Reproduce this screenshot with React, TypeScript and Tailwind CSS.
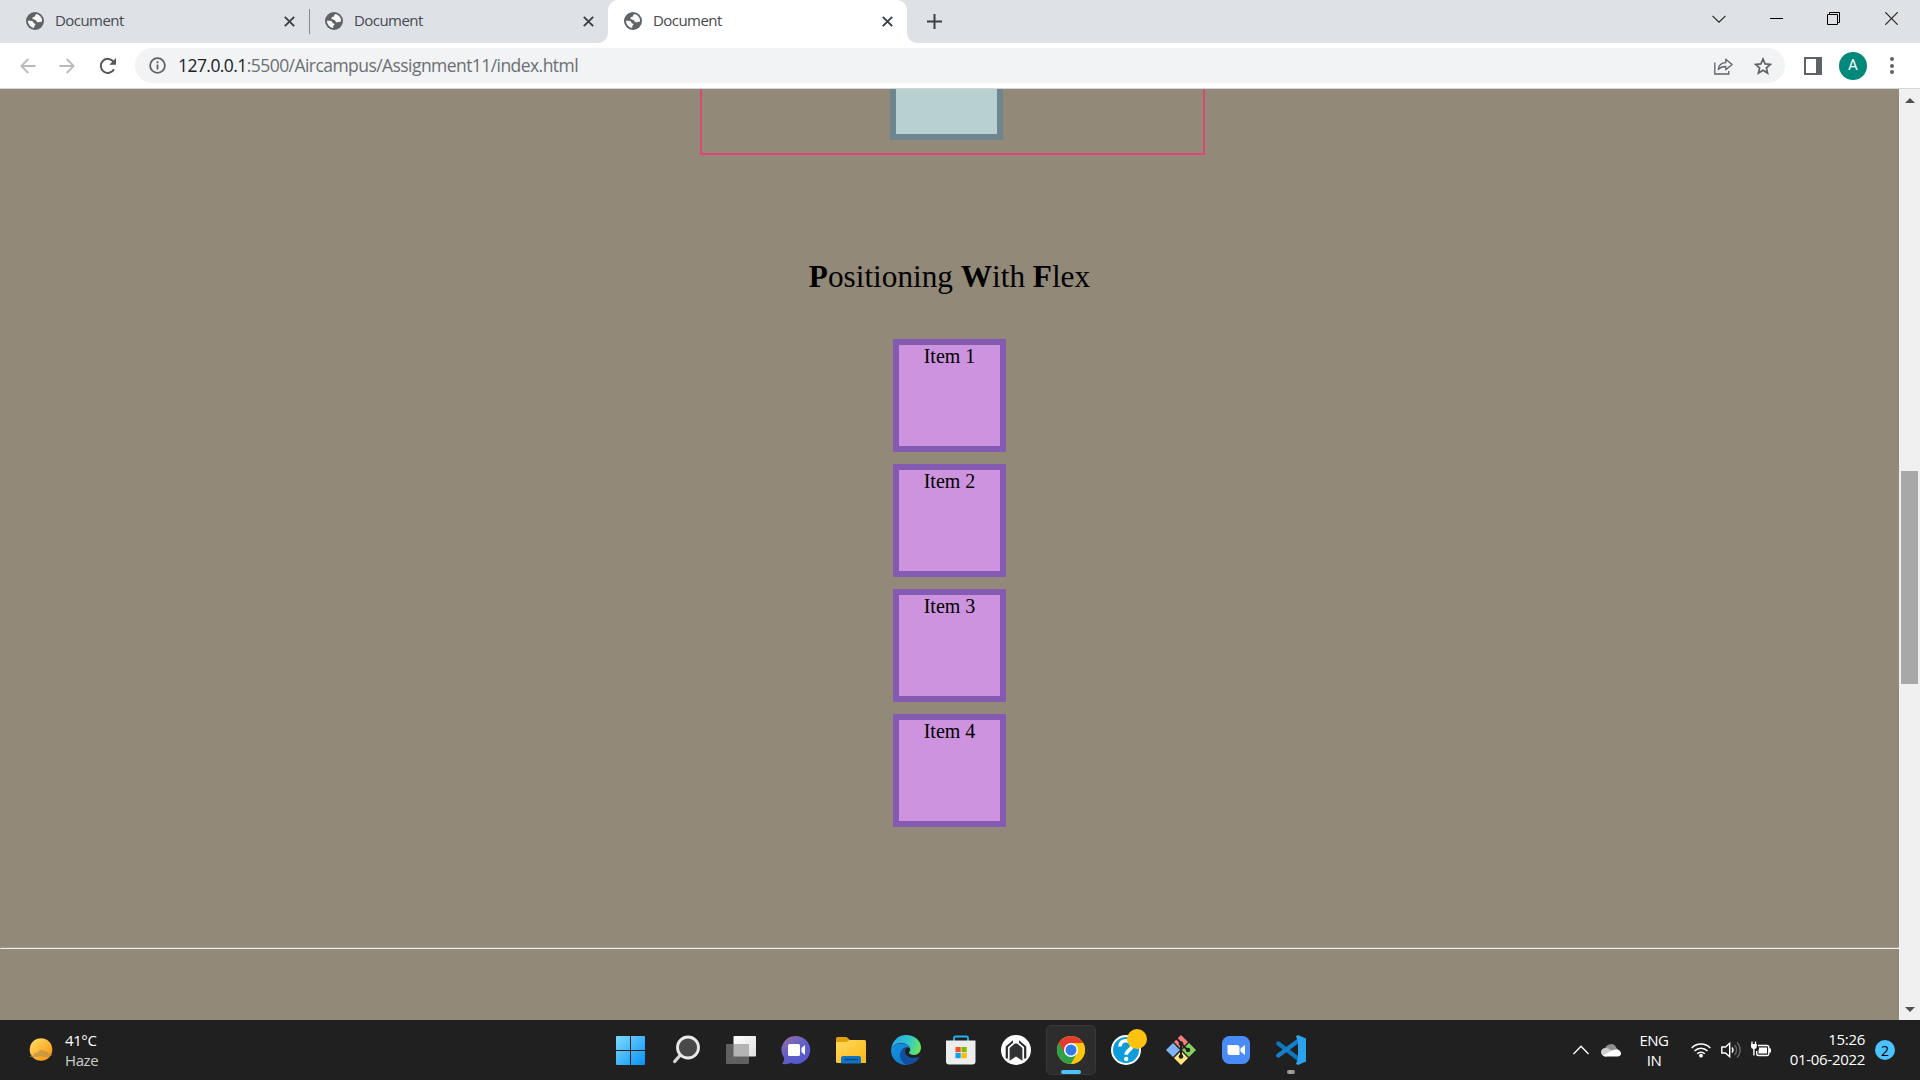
import React from "react";

function Globe() {
  return (
    <svg width="18" height="18" viewBox="0 0 18 18">
      <circle cx="9" cy="9" r="9" fill="#5f6368" />
      <path
        d="M10.600 2C9.600 2.600 8.800 3.400 9 4.500c-1.600.1-2.800 1-2.600 2.200.2 1.100 1.600.9 2.900 1.300 1.400.5.900 2.200 2.400 2.300 1.500.1 2.400-.9 4.400-.9A7.100 7.100 0 0 0 10.600 2zM1.900 8.800c2-.1 4.500-.3 5.200.9.500 1 .4 1.700 1.700 1.900.9.100 1 1 .1 1.700-.8.600-.6 1.800-.7 2.700A7.100 7.100 0 0 1 1.900 8.800z"
        fill="#fff"
        fillOpacity=".95"
      />
    </svg>
  );
}

function Cross() {
  return (
    <svg width="11" height="11" viewBox="0 0 11 11" stroke="#3c4043" strokeWidth="1.9">
      <path d="M.8.8l9.400 9.400M10.200.8L.8 10.200" />
    </svg>
  );
}

function TabContent() {
  return (
    <>
      <Globe />
      <span className="-mt-[2px] ml-[11px] w-[229px] whitespace-nowrap text-[15px] leading-5 tracking-[-0.55px] text-[#45494d]">Document</span>
      <Cross />
    </>
  );
}

function TabStrip() {
  return (
    <div className="flex h-[43px] bg-[#dee1e6]">
      <div className="flex h-[42px] w-[309px] items-center pl-[26px]">
        <TabContent />
      </div>
      <div className="mt-[9px] h-[25px] w-px bg-[#85888d]" />
      <div className="flex h-[42px] w-[288px] items-center pl-[15px]">
        <TabContent />
      </div>
      <div className="h-[43px] w-[10px] bg-white">
        <div className="h-full w-full rounded-br-[10px] bg-[#dee1e6]" />
      </div>
      <div className="h-[43px] w-[299px] rounded-t-[10px] bg-white">
        <div className="flex h-[42px] items-center pl-4">
          <TabContent />
        </div>
      </div>
      <div className="h-[43px] w-[10px] bg-white">
        <div className="h-full w-full rounded-bl-[10px] bg-[#dee1e6]" />
      </div>
      <svg className="ml-[10px] mt-[14px]" width="15" height="15" viewBox="0 0 15 15" stroke="#3c4043" strokeWidth="2">
        <path d="M7.500 0v15M0 7.500h15" />
      </svg>
      <div className="ml-auto flex h-[37px] items-center pr-[22px]">
        <svg className="mr-[44px]" width="14" height="8" viewBox="0 0 14 8" fill="none" stroke="#222" strokeWidth="1.100">
          <path d="M.5.8L7 7.200 13.500.8" />
        </svg>
        <div className="mr-[44px] h-px w-[13px] bg-black" />
        <svg className="mr-[45px]" width="13" height="13" viewBox="0 0 13 13" fill="none" stroke="#000">
          <path d="M.5 2.500h10v10H.5zM2.500 2.500v-2h10v10h-2" />
        </svg>
        <svg width="13" height="13" viewBox="0 0 13 13" stroke="#222" strokeWidth="1.200">
          <path d="M.3.3l12.400 12.400M12.700.3L.3 12.700" />
        </svg>
      </div>
    </div>
  );
}

function Toolbar() {
  return (
    <div className="flex h-[46px] items-center border-b border-[#d4d6d9] bg-white pl-5">
      <svg width="16" height="16" viewBox="0 0 16 16" fill="none" stroke="#b8babd" strokeWidth="1.800">
        <path d="M15.500 8H1.500M8.300 1L1.300 8l7 7" />
      </svg>
      <svg className="ml-[23px]" width="16" height="16" viewBox="0 0 16 16" fill="none" stroke="#b8babd" strokeWidth="1.800">
        <path d="M.5 8h14M7.700 1l7 7-7 7" />
      </svg>
      <svg className="ml-[24px]" width="18" height="18" viewBox="0 0 18 18" fill="none" stroke="#54585c" strokeWidth="2">
        <path d="M15 12.200A7 7 0 1 1 14.600 4.900" />
        <path d="M17 1v6.700h-6.700z" fill="#54585c" stroke="none" />
      </svg>
      <div className="ml-[18px] flex h-[35px] w-[1650px] items-center rounded-full bg-[#f1f3f4] pl-[14px] pr-[13px]">
        <svg width="17" height="17" viewBox="0 0 17 17" fill="none" stroke="#5f6368" strokeWidth="1.800">
          <circle cx="8.500" cy="8.500" r="7.400" />
          <path d="M8.500 7.500v5M8.500 4.300v1.900" />
        </svg>
        <span className="-mt-px ml-[12px] whitespace-nowrap text-[17.5px] leading-6 tracking-[-0.56px] text-[#6b6f73]">
          <span className="text-[#202124]">127.0.0.1</span>:5500/Aircampus/Assignment11/index.html
        </span>
        <svg className="ml-auto" width="19" height="18" viewBox="0 0 19 18" fill="none" stroke="#5f6368" strokeWidth="1.300">
          <path d="M.8 5.500V17h14v-3" />
          <path d="M4.300 12.500c.4-4.300 3-6.600 7.500-6.800V2.200l6.300 5.300-6.300 5.300V9.500c-3.400 0-5.600.9-7.500 3z" strokeLinejoin="round" />
        </svg>
        <svg className="ml-[21px]" width="18" height="18" viewBox="0 0 18 18" fill="none" stroke="#5f6368" strokeWidth="1.700">
          <path d="M9 2l2.100 4.900 5.300.5-4 3.500 1.200 5.200L9 13.300l-4.600 2.800 1.200-5.200-4-3.500 5.300-.5z" />
        </svg>
      </div>
      <div className="ml-[19px] h-[18px] w-[18px] border-2 border-r-[6px] border-[#5f6368]" />
      <div className="ml-[17px] flex h-7 w-7 items-center justify-center rounded-full bg-[#00897b] font-[Roboto,sans-serif] text-[15px] text-white">A</div>
      <div className="ml-[23px] flex flex-col gap-[2.5px]">
        <span className="h-1 w-1 rounded-full bg-[#5f6368]" />
        <span className="h-1 w-1 rounded-full bg-[#5f6368]" />
        <span className="h-1 w-1 rounded-full bg-[#5f6368]" />
      </div>
    </div>
  );
}

function Page() {
  return (
    <div className="flex h-[931px]">
      <div className="w-[1899px] overflow-hidden bg-[#928979] font-['Liberation_Serif','Times_New_Roman',serif] text-black">
        <div className="ml-[700px] h-[66px] w-[505px] border-2 border-t-0 border-[#db4779]">
          <div className="ml-[188px] h-[51px] w-[113px] border-[6px] border-t-0 border-[#6c858e] bg-[#b9d0d1]" />
        </div>
        <h1 className="mt-[103px] text-center text-[31.25px] leading-[38px]">
          <b>P</b>ositioning <b>W</b>ith <b>F</b>lex
        </h1>
        <div className="mt-[43px] flex flex-col items-center gap-3">
          {[1, 2, 3, 4].map((n) => (
            <div key={n} className="h-[113px] w-[113px] border-[6px] border-[#845ab3] bg-[#ce93df] text-center text-[20px] leading-[23px]">
              Item {n}
            </div>
          ))}
        </div>
        <div className="mt-[120px] h-[2px] border border-b-[#eee] border-l-[#9a9a9a] border-r-[#eee] border-t-[#a09b92]" />
      </div>
      <div className="flex w-[21px] flex-col items-center bg-[#f0f0f0]">
        <svg className="mt-[9px]" width="10" height="5" viewBox="0 0 10 5">
          <path d="M0 5L5 0l5 5z" fill="#505050" />
        </svg>
        <div className="mt-[368px] h-[213px] w-[17px] bg-[#a8a8a8]" />
        <svg className="mb-[8px] mt-auto" width="10" height="5" viewBox="0 0 10 5">
          <path d="M0 0l5 5 5-5z" fill="#505050" />
        </svg>
      </div>
    </div>
  );
}

function Windows() {
  return (
    <svg width="30" height="30" viewBox="0 0 30 30">
      <defs>
        <linearGradient id="win" x1="0" y1="0" x2="29" y2="29" gradientUnits="userSpaceOnUse">
          <stop stopColor="#7fdcff" />
          <stop offset="1" stopColor="#0a93f5" />
        </linearGradient>
      </defs>
      <path d="M0 2a1 1 0 0 1 1-1H14V15H0zM15 1h13a1 1 0 0 1 1 1V15H15zM0 16H14v14H1a1 1 0 0 1-1-1zM15 16h14v13a1 1 0 0 1-1 1H15z" fill="url(#win)" />
    </svg>
  );
}

function Search() {
  return (
    <svg width="30" height="30" viewBox="0 0 30 30">
      <path d="M9.800 19.500L3.700 26.500" stroke="#d2d4d6" strokeWidth="3.400" strokeLinecap="round" />
      <circle cx="17" cy="12.500" r="10.500" fill="#484848" stroke="#e9eaeb" strokeWidth="2.800" />
    </svg>
  );
}

function TaskView() {
  return (
    <svg width="30" height="30" viewBox="0 0 30 30">
      <defs>
        <linearGradient id="tv" x1="0" y1="0" x2="1" y2="1">
          <stop stopColor="#fff" />
          <stop offset="1" stopColor="#dedede" />
        </linearGradient>
      </defs>
      <rect x="7.500" y="1" width="22.500" height="20.500" rx="1" fill="url(#tv)" />
      <rect x="0" y="9" width="23" height="20" rx="1" fill="#606060" />
      <path d="M7.500 9H23v12.500H7.500z" fill="#b4b4b4" />
    </svg>
  );
}

function Chat() {
  return (
    <svg width="30" height="30" viewBox="0 0 30 30">
      <defs>
        <linearGradient id="chat" x1="0" y1="0" x2=".7" y2="1">
          <stop stopColor="#9a6da4" />
          <stop offset=".55" stopColor="#6260c4" />
          <stop offset="1" stopColor="#5356cf" />
        </linearGradient>
      </defs>
      <path d="M15.500 1a14 14 0 1 1-5.500 27c-3 1.200-5.800 1.300-8.800 1 1.200-1.600 1.900-3.500 1.900-6A14 14 0 0 1 15.500 1z" fill="url(#chat)" />
      <rect x="7" y="9" width="12" height="12" rx="1.500" fill="#fff" />
      <path d="M20.500 13l3.500-3v10l-3.500-3z" fill="#fff" />
    </svg>
  );
}

function Explorer() {
  return (
    <svg width="30" height="30" viewBox="0 0 30 30">
      <defs>
        <linearGradient id="fold" x1="0" y1="0" x2="1" y2="1">
          <stop stopColor="#ffd95e" />
          <stop offset="1" stopColor="#fab916" />
        </linearGradient>
      </defs>
      <path d="M0 3.500A1.500 1.500 0 0 1 1.500 2h9L14 5h15v10H0z" fill="#e0a008" />
      <path d="M0 7h10.500L13.500 5H28.500A1.500 1.500 0 0 1 30 6.500V28H1.500A1.500 1.500 0 0 1 0 26.500z" fill="url(#fold)" />
      <path d="M5 28.500V23a2 2 0 0 1 2-2h16a2 2 0 0 1 2 2v5.500z" fill="#1173c4" />
      <path d="M9 24.500h12.500" stroke="#0a4781" strokeWidth="1.300" strokeLinecap="round" />
    </svg>
  );
}

function Edge() {
  return (
    <svg width="30" height="30" viewBox="0 0 30 30">
      <defs>
        <linearGradient id="e1" x1="2" y1="5" x2="30" y2="15" gradientUnits="userSpaceOnUse">
          <stop stopColor="#29a9e8" />
          <stop offset=".5" stopColor="#30c6cf" />
          <stop offset="1" stopColor="#6fea4e" />
        </linearGradient>
        <linearGradient id="e2" x1="0" y1="8" x2="16" y2="30" gradientUnits="userSpaceOnUse">
          <stop stopColor="#1795e0" />
          <stop offset="1" stopColor="#0b77d0" />
        </linearGradient>
      </defs>
      <path d="M0 15C1 6 7 0 15 0c9 0 15 6 15 12.500 0 4.500-3 7.500-7 7.500-3 0-5-1-5-2.200 0-.8 1.200-1.200 1.200-3.300C19.200 11 15 8 10 8 5 8 1.500 11 0 15z" fill="url(#e1)" />
      <path d="M0 15C1.500 11 5 8.500 10 8.500c4.500 0 8 2 8.900 4.500C14 10.500 9 15 9.500 21c.3 4 3 7.500 7.500 8.800C8 31 0 24.500 0 15z" fill="url(#e2)" />
      <path d="M16.500 12.300c-5 .2-8 4.700-7 9.700.8 4 4 7 7.500 7.900 5-.7 9-3.400 11-7.200.3-.7-.3-1.200-1-.8-5 2.200-13 .1-13-6 0-1.600 1-2.900 2.500-3.600z" fill="#124f9c" />
    </svg>
  );
}

function Store() {
  return (
    <svg width="30" height="30" viewBox="0 0 30 30">
      <path d="M8 7V3a1.500 1.500 0 0 1 1.500-1.500h11A1.500 1.500 0 0 1 22 3v4" fill="none" stroke="#23b4ee" strokeWidth="1.800" />
      <path d="M0 5.500h29.500v21a3 3 0 0 1-3 3H3a3 3 0 0 1-3-3z" fill="#ededed" />
      <path d="M9.500 12h5.200v5.200H9.500z" fill="#f25022" />
      <path d="M15.500 12h5.200v5.200h-5.200z" fill="#7fba00" />
      <path d="M9.500 18h5.200v5.200H9.500z" fill="#00a4ef" />
      <path d="M15.500 18h5.200v5.200h-5.200z" fill="#ffb900" />
    </svg>
  );
}

function Armor() {
  return (
    <svg width="30" height="30" viewBox="0 0 30 30">
      <circle cx="15" cy="15" r="15" fill="#fff" />
      <path d="M4.700 23.500V11.500L12 5.300v2.500L6.900 12.300v11.200zM25.300 23.500V11.500L18 5.300v2.500l5.100 4.500v11.200z" fill="#26282b" />
      <path d="M8.600 25.800V13l5.200-4.600h2.400l5.200 4.600v12.800L15 21.600z" fill="#303236" />
    </svg>
  );
}

function Chrome() {
  return (
    <svg width="28" height="28" viewBox="0 0 28 28">
      <circle cx="14" cy="14" r="14" fill="#fdc60a" />
      <path d="M14 14L1.880 7A14 14 0 0 0 14 28l6-10.500z" fill="#2da04a" />
      <path d="M1.880 7A14 14 0 0 1 26.120 7H14l-6.060 10.500z" fill="#e33b2e" />
      <path d="M14 7h12.120A14 14 0 0 1 14 28l6.060-10.500z" fill="#fdc60a" />
      <circle cx="14" cy="14" r="7" fill="#fff" />
      <circle cx="14" cy="14" r="5.500" fill="#2f7bea" />
    </svg>
  );
}

function Help() {
  return (
    <svg className="overflow-visible" width="30" height="30" viewBox="0 0 30 30">
      <circle cx="15" cy="15" r="14" fill="#0d9ddb" stroke="#fff" strokeWidth="2" />
      <path d="M9 11.500C9 7.500 11.500 5.800 15 5.800s6 2 6 5c0 4.200-5.800 4.200-5.800 9" fill="none" stroke="#fff" strokeWidth="3.600" />
      <circle cx="15.200" cy="24" r="2.200" fill="#fff" />
      <circle cx="26" cy="4" r="10" fill="#ffc20e" />
    </svg>
  );
}

function Git() {
  return (
    <svg width="30" height="30" viewBox="0 0 30 30">
      <path d="M15 0l7 7-7 7-7-7z" fill="#f87c7c" />
      <path d="M7 8l7 7-7 7-7-7z" fill="#80b3ff" />
      <path d="M23 8l7 7-7 7-7-7z" fill="#87d35f" />
      <path d="M15 16l7 7-7 7-7-7z" fill="#ffe680" />
      <path d="M10.500 3.500L15 8v13M15 8.500l6.500 6.500" fill="none" stroke="#20201f" strokeWidth="2" />
      <circle cx="15" cy="8.500" r="2.300" fill="#20201f" />
      <circle cx="22" cy="15" r="2.300" fill="#20201f" />
      <circle cx="15" cy="21.500" r="2.300" fill="#20201f" />
    </svg>
  );
}

function ZoomApp() {
  return (
    <svg width="28" height="28" viewBox="0 0 28 28">
      <rect width="28" height="28" rx="7.500" fill="#4a8cf7" />
      <path d="M5.500 9h9.500a2.500 2.500 0 0 1 2.500 2.500V19H8a2.500 2.500 0 0 1-2.500-2.500z" fill="#fff" />
      <path d="M18.500 12.500L23 9v10l-4.500-3.500z" fill="#fff" />
    </svg>
  );
}

function Code() {
  return (
    <svg width="30" height="30" viewBox="0 0 30 30">
      <path d="M2.300 8.500L22 23.500" stroke="#0f76ba" strokeWidth="4.200" strokeLinecap="round" />
      <path d="M2.300 20.500L22 6" stroke="#1580c8" strokeWidth="4.200" strokeLinecap="round" />
      <path d="M22 0l8 3.500v23L22 30l-2-1.200 2-5.300v-17L20 1.200z" fill="#2ba3ec" />
    </svg>
  );
}

const ICONS = [Windows, Search, TaskView, Chat, Explorer, Edge, Store, Armor, Chrome, Help, Git, ZoomApp, Code];

function Taskbar() {
  return (
    <div className="flex h-[60px] bg-[#202020] text-white">
      <div className="flex w-[606px] pl-[29px]">
        <svg className="mt-[18px]" width="24" height="24" viewBox="0 0 24 24">
          <defs>
            <linearGradient id="sun" x1="0" y1="0" x2="1" y2="1">
              <stop stopColor="#ffe065" />
              <stop offset="1" stopColor="#f78f0c" />
            </linearGradient>
          </defs>
          <circle cx="12" cy="11.500" r="11.300" fill="url(#sun)" />
          <path d="M0 19l5-2-1-1 5-2 3-2.500 5 2 3 1-1 1.500 5 1-6 2-7-.5-7 .8z" fill="#b98b4d" fillOpacity=".65" />
        </svg>
        <div className="ml-[12px] mt-[10px] text-[15px] leading-5 tracking-[-0.4px]">
          <div>41°C</div>
          <div className="text-[#cdcdcd]">Haze</div>
        </div>
      </div>
      <div className="flex gap-[5px] pt-[5px]">
        {ICONS.map((Icon, i) => (
          <div key={i} className={i === 8 ? "flex h-[50px] w-[50px] flex-col items-center rounded-[5px] border border-[#383838] bg-[#2d2d2d]" : "flex h-[50px] w-[50px] flex-col items-center pt-px"}>
            <div className="flex h-[48px] shrink-0 items-center">
              <Icon />
            </div>
            {i === 8 && <div className="-mt-1 h-1 w-5 shrink-0 rounded-full bg-[#4cc2ff]" />}
            {i === 12 && <div className="-mt-1 h-1 w-2 shrink-0 rounded-full bg-[#9a9a9a]" />}
          </div>
        ))}
      </div>
      <div className="ml-auto flex h-[60px] items-center pr-[25px]">
        <svg width="16" height="10" viewBox="0 0 16 10" fill="none" stroke="#fff" strokeWidth="1.300">
          <path d="M.5 9L8 1.200 15.500 9" />
        </svg>
        <svg className="ml-3" width="20" height="14" viewBox="0 0 20 14">
          <path d="M4 6a6 6 0 0 1 11.500-1L19 8l-9 3-6-2z" fill="#8f8f8f" />
          <path d="M4 13.500A4.200 4.200 0 0 1 4.500 5c2-.1 3 .7 6 2.500L17 11z" fill="#cfcfcf" />
          <path d="M2 12.500l9-5C14 5.500 20 6.500 20 10.500c0 2-1.500 3-3.500 3H4z" fill="#fff" />
        </svg>
        <div className="ml-[17px] w-[32px] text-center text-[15px] leading-5 tracking-[-0.5px]">
          <div>ENG</div>
          <div>IN</div>
        </div>
        <svg className="ml-[21px]" width="20" height="16" viewBox="0 0 20 16" fill="none" stroke="#fff" strokeWidth="1.500">
          <path d="M.7 6a13 13 0 0 1 18.600 0M3.500 9a9 9 0 0 1 13 0M6.200 11.800a5.400 5.400 0 0 1 7.600 0" />
          <circle cx="10" cy="13.700" r="1.900" fill="#fff" stroke="none" />
        </svg>
        <svg className="ml-[10px]" width="20" height="18" viewBox="0 0 20 18" fill="none" stroke="#fff" strokeWidth="1.400">
          <path d="M.8 6h3.700L8.700 2.300v13.400L4.500 12H.8z" />
          <path d="M11 6.500a4 4 0 0 1 0 5" />
          <path d="M13.500 4a7 7 0 0 1 0 10M16 1.500a10.500 10.500 0 0 1 0 15" stroke="#666" />
        </svg>
        <svg className="ml-[10px]" width="20" height="18" viewBox="0 0 20 18">
          <path d="M7 4.500h9a1.800 1.800 0 0 1 1.800 1.800v6.400a1.800 1.800 0 0 1-1.800 1.800H7.500a1.800 1.800 0 0 1-1.800-1.800V10" fill="none" stroke="#fff" strokeWidth="1.400" />
          <path d="M8 6.500h8v6H7.500V9L8 8zM18 7.500h2v4h-2z" fill="#fff" />
          <path d="M1 .5v3M4.500.5v3" stroke="#fff" strokeWidth="1.300" />
          <path d="M0 3h5.800v2.500A2.500 2.500 0 0 1 3.600 8v6.500H2.200V8A2.500 2.500 0 0 1 0 5.500z" fill="#fff" />
        </svg>
        <div className="-mt-[2px] ml-[15px] w-[79px] whitespace-nowrap text-right text-[15px] leading-5 tracking-[-0.3px]">
          <div>15:26</div>
          <div>01-06-2022</div>
        </div>
        <div className="ml-[10px] flex h-5 w-5 items-center justify-center rounded-full bg-[#4cc2ff] text-[14px] text-black">2</div>
      </div>
    </div>
  );
}

export default function App() {
  return (
    <div className="h-[1080px] w-[1920px] overflow-hidden font-['Open_Sans','Noto_Sans',sans-serif]">
      <TabStrip />
      <Toolbar />
      <Page />
      <Taskbar />
    </div>
  );
}
